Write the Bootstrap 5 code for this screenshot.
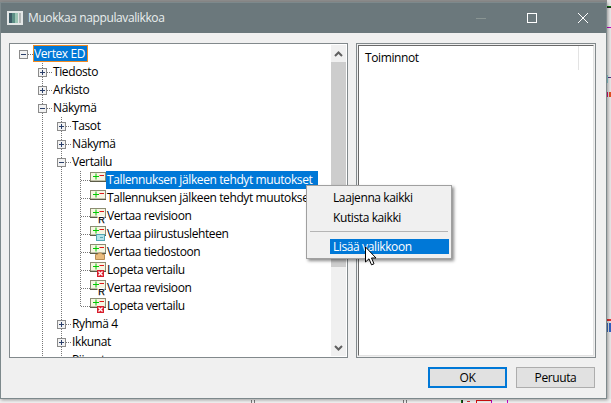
<!DOCTYPE html>
<html lang="fi">
<head>
<meta charset="utf-8">
<title>Muokkaa nappulavalikkoa</title>
<link href="https://cdn.jsdelivr.net/npm/bootstrap@5.3.0/dist/css/bootstrap.min.css" rel="stylesheet">
<style>
html,body{height:403px;overflow:hidden}
body{background:#fff;position:relative;font-family:"Open Sans","Noto Sans",sans-serif;font-size:12px;line-height:18px;color:#000;letter-spacing:-.39px}
.backdrop{position:absolute;left:0;top:0;width:611px;height:403px}
.dlg{position:relative;width:607px;height:397px;margin-top:2px;background:#f0f0f0;border:1px solid #7d898c;box-shadow:1px 1px 3px rgba(0,0,0,.35)}
.ttl{height:30px;background:#6b787c;color:#e9eeee;padding-left:6px;gap:5px}
.ctl{width:46px;height:30px}
.main-area{padding:10px 0 0 8px;gap:8px;height:325px}
.tree-box{width:339px;height:315px;border:1px solid #82898c;background:#fff;overflow:hidden}
.tree-body{padding:1px 0 0 4px;height:313px;overflow:hidden}
.trow{height:18px;white-space:nowrap}
.gc{width:19px;height:18px;flex:none;display:flex;align-items:center;justify-content:center}
.v{background:repeating-linear-gradient(to bottom,#777 0 1px,transparent 1px 2px) 9px 0/1px 100% no-repeat}
.h{background:repeating-linear-gradient(to right,#777 0 1px,transparent 1px 2px) 10px 9px/9px 1px no-repeat}
.vh{background:repeating-linear-gradient(to bottom,#777 0 1px,transparent 1px 2px) 9px 0/1px 100% no-repeat,repeating-linear-gradient(to right,#777 0 1px,transparent 1px 2px) 10px 9px/9px 1px no-repeat}
.elb{background:repeating-linear-gradient(to bottom,#777 0 1px,transparent 1px 2px) 9px 0/1px 10px no-repeat,repeating-linear-gradient(to right,#777 0 1px,transparent 1px 2px) 10px 9px/9px 1px no-repeat}
.exp{width:9px;height:9px;display:block;flex:none}
.ico{width:16px;height:18px;flex:none;display:block}
.lbl{padding:0 1px;height:18px}
.lbl-ico{padding:0 6px 0 1px}
.sel{background:#0078d7;color:#fff}
.sel-root{outline:1px solid #f08a24;outline-offset:-1px;height:17px;padding-right:3px;padding-left:1px}
.sbar{width:15px;height:311px;margin:1px 1px 0 0;flex:none;background:#f0f0f0}
.sb-btn{height:17px}
.sb-thumb{height:205px;background:#cdcdcd}
.sb-rest{flex:1}
.list-box{width:240px;height:315px;border:1px solid #82898c;padding:1px;background:#f0f0f0}
.list-in{height:100%;background:#fff;border:1px solid;border-color:#696969 #e3e3e3 #e3e3e3 #696969}
.colh{width:220px;height:24px;border-right:1px solid #e3e3e3;padding:3px 0 0 6px}
.foot{padding:9px 11px 0 0;gap:9px}
.win-btn{width:79px;height:21px;padding:0;border-radius:0;background:#e1e1e1;border:1px solid #adadad;color:#000;font-size:12px;line-height:18px;letter-spacing:-.39px}
.win-def{border:2px solid #0078d7}
.ctxm{position:absolute;left:306px;top:185px;width:146px;height:74px;background:#f0f0f0;border:1px solid #a0a0a0;box-shadow:2px 2px 3px rgba(0,0,0,.45);padding:2px 2px 0 2px}
.mi{height:20px;padding-left:24px;line-height:19px}
.msep{height:1px;background:#b4b4b4;margin:3px 1px 7px 1px}
.mi-sel{height:15px;line-height:15px;background:#0078d7;color:#fff;margin-left:21px;padding-left:3px}
.cur{position:absolute;left:364px;top:246px;width:14px;height:21px}
</style>
</head>
<body>
<svg class="backdrop" viewBox="0 0 611 403">
<rect width="611" height="2" fill="#8d8d8d"/>
<rect x="607" y="0" width="4" height="403" fill="#e6e6e6"/>
<rect x="607" y="6" width="4" height="1" fill="#0a7a0a"/><rect x="607" y="7" width="4" height="1" fill="#222"/>
<rect x="607" y="27" width="4" height="1" fill="#c000c0"/>
<rect x="607" y="75" width="1" height="8" fill="#8fd0d8"/><rect x="608" y="77" width="3" height="1" fill="#503080"/>
<rect x="607" y="92" width="1" height="5" fill="#e01070"/><rect x="609" y="92" width="2" height="5" fill="#e05020"/>
<rect x="607" y="323" width="1" height="9" fill="#4070c0"/><rect x="609" y="323" width="2" height="9" fill="#3060c0"/>
<rect x="607" y="319" width="4" height="2" fill="#e03030"/>
<rect y="399" width="611" height="4" fill="#efefef"/>
<rect x="251" y="400" width="1" height="3" fill="#777"/><rect x="254" y="400" width="1" height="3" fill="#777"/>
<rect x="403" y="400" width="1" height="3" fill="#777"/><rect x="406" y="400" width="1" height="3" fill="#777"/>
<rect x="461" y="400" width="1" height="3" fill="#0a7a0a"/><rect x="462" y="400" width="1" height="3" fill="#222"/>
<rect x="467" y="401" width="3" height="1" fill="#d03030"/>
<rect x="476" y="400" width="15" height="1" fill="#e01010"/><rect x="476" y="400" width="1" height="3" fill="#e01010"/><rect x="491" y="400" width="1" height="3" fill="#c000c0"/>
<rect x="507" y="400" width="1" height="3" fill="#d000d0"/>
</svg>

<svg width="0" height="0" class="d-block position-absolute">
<defs>
<symbol id="xp" viewBox="0 0 9 9"><rect x=".5" y=".5" width="8" height="8" fill="#f2f2f2" stroke="#8b8b8b"/><rect x="2" y="4" width="5" height="1" fill="#2a3f6a"/><rect x="4" y="2" width="1" height="5" fill="#2a3f6a"/></symbol>
<symbol id="xm" viewBox="0 0 9 9"><rect x=".5" y=".5" width="8" height="8" fill="#f2f2f2" stroke="#8b8b8b"/><rect x="2" y="4" width="5" height="1" fill="#2a3f6a"/></symbol>
<symbol id="cmp" viewBox="0 0 16 18"><rect x=".5" y="1.500" width="15" height="8.500" fill="#f6f6e2" stroke="#8c8c72"/><path d="M0 10.500h16" stroke="#5c5c48"/><path d="M3 5.500h6M6 2.500v6" stroke="#00c800"/><path d="M9.500 4.500h4.500" stroke="#e01818"/></symbol>
<symbol id="ovr" viewBox="0 0 16 18"><rect x="7.500" y="9" width="7" height="7" fill="#fff"/><text x="8.200" y="16" font-family="Liberation Sans" font-size="9" font-weight="400" stroke="#000" stroke-width=".25" fill="#000">R</text></symbol>
<symbol id="ovd" viewBox="0 0 16 18"><rect x="6.500" y="9.500" width="8" height="6" fill="#b4e3e8" stroke="#52a8b4"/><rect x="10" y="12" width="3" height="1" fill="#52a8b4"/></symbol>
<symbol id="ovf" viewBox="0 0 16 18"><path d="M5.500 16.500v-5h2l1-1.500h3l1 1.500h2v5z" fill="#e9bb7c" stroke="#b98d52"/></symbol>
<symbol id="ovx" viewBox="0 0 16 18"><rect x="7" y="9" width="7" height="7" fill="#d81e2c"/><path d="M8.500 10.500l4 4M12.500 10.500l-4 4" stroke="#fff" stroke-width="1.300"/></symbol>
</defs>
</svg>

<div class="dlg d-flex flex-column">
  <div class="ttl d-flex align-items-center">
    <svg width="16" height="14" viewBox="0 0 16 14"><rect width="16" height="14" fill="#e3e6e6"/><rect x="2" y="2" width="3" height="10" fill="#3d5c66"/><rect x="5" y="2" width="3" height="10" fill="#5d8f86"/><rect x="8" y="2" width="3" height="10" fill="#9cc4b4"/><rect x="12" y="2" width="2" height="10" fill="#b4b8b8"/></svg>
    <span class="flex-grow-1">Muokkaa nappulavalikkoa</span>
    <span class="ctl d-flex align-items-center justify-content-center"><svg width="10" height="10" viewBox="0 0 10 10"><path d="M0 5.500h10" stroke="#8a9593"/></svg></span>
    <span class="ctl d-flex align-items-center justify-content-center"><svg width="10" height="10" viewBox="0 0 10 10"><rect x=".5" y=".5" width="9" height="9" fill="none" stroke="#fff"/></svg></span>
    <span class="ctl d-flex align-items-center justify-content-center"><svg width="10" height="10" viewBox="0 0 10 10"><path d="M0 0l10 10M10 0L0 10" stroke="#fff"/></svg></span>
  </div>

  <div class="main-area d-flex">
    <div class="tree-box d-flex">
      <div class="tree-body flex-grow-1">
        <div class="trow d-flex"><span class="gc h"><svg class="exp"><use href="#xm"/></svg></span><span class="lbl sel sel-root">Vertex ED</span></div>
        <div class="trow d-flex"><span class="gc"></span><span class="gc vh"><svg class="exp"><use href="#xp"/></svg></span><span class="lbl">Tiedosto</span></div>
        <div class="trow d-flex"><span class="gc"></span><span class="gc vh"><svg class="exp"><use href="#xp"/></svg></span><span class="lbl">Arkisto</span></div>
        <div class="trow d-flex"><span class="gc"></span><span class="gc vh"><svg class="exp"><use href="#xm"/></svg></span><span class="lbl">Näkymä</span></div>
        <div class="trow d-flex"><span class="gc"></span><span class="gc v"></span><span class="gc vh"><svg class="exp"><use href="#xp"/></svg></span><span class="lbl">Tasot</span></div>
        <div class="trow d-flex"><span class="gc"></span><span class="gc v"></span><span class="gc vh"><svg class="exp"><use href="#xp"/></svg></span><span class="lbl">Näkymä</span></div>
        <div class="trow d-flex"><span class="gc"></span><span class="gc v"></span><span class="gc vh"><svg class="exp"><use href="#xm"/></svg></span><span class="lbl">Vertailu</span></div>
        <div class="trow d-flex"><span class="gc"></span><span class="gc v"></span><span class="gc v"></span><span class="gc vh"></span><svg class="ico"><use href="#cmp"/></svg><span class="lbl lbl-ico sel">Tallennuksen jälkeen tehdyt muutokset</span></div>
        <div class="trow d-flex"><span class="gc"></span><span class="gc v"></span><span class="gc v"></span><span class="gc vh"></span><svg class="ico"><use href="#cmp"/></svg><span class="lbl lbl-ico">Tallennuksen jälkeen tehdyt muutokset</span></div>
        <div class="trow d-flex"><span class="gc"></span><span class="gc v"></span><span class="gc v"></span><span class="gc vh"></span><svg class="ico"><use href="#cmp"/><use href="#ovr"/></svg><span class="lbl lbl-ico">Vertaa revisioon</span></div>
        <div class="trow d-flex"><span class="gc"></span><span class="gc v"></span><span class="gc v"></span><span class="gc vh"></span><svg class="ico"><use href="#cmp"/><use href="#ovd"/></svg><span class="lbl lbl-ico">Vertaa piirustuslehteen</span></div>
        <div class="trow d-flex"><span class="gc"></span><span class="gc v"></span><span class="gc v"></span><span class="gc vh"></span><svg class="ico"><use href="#cmp"/><use href="#ovf"/></svg><span class="lbl lbl-ico">Vertaa tiedostoon</span></div>
        <div class="trow d-flex"><span class="gc"></span><span class="gc v"></span><span class="gc v"></span><span class="gc vh"></span><svg class="ico"><use href="#cmp"/><use href="#ovx"/></svg><span class="lbl lbl-ico">Lopeta vertailu</span></div>
        <div class="trow d-flex"><span class="gc"></span><span class="gc v"></span><span class="gc v"></span><span class="gc vh"></span><svg class="ico"><use href="#cmp"/><use href="#ovr"/></svg><span class="lbl lbl-ico">Vertaa revisioon</span></div>
        <div class="trow d-flex"><span class="gc"></span><span class="gc v"></span><span class="gc v"></span><span class="gc elb"></span><svg class="ico"><use href="#cmp"/><use href="#ovx"/></svg><span class="lbl lbl-ico">Lopeta vertailu</span></div>
        <div class="trow d-flex"><span class="gc"></span><span class="gc v"></span><span class="gc vh"><svg class="exp"><use href="#xp"/></svg></span><span class="lbl">Ryhmä 4</span></div>
        <div class="trow d-flex"><span class="gc"></span><span class="gc v"></span><span class="gc vh"><svg class="exp"><use href="#xp"/></svg></span><span class="lbl">Ikkunat</span></div>
        <div class="trow d-flex"><span class="gc"></span><span class="gc v"></span><span class="gc vh"></span><span class="lbl">Piirustus</span></div>
      </div>
      <div class="sbar d-flex flex-column">
        <div class="sb-btn d-flex align-items-center justify-content-center"><svg width="9" height="6" viewBox="0 0 9 6"><path d="M1 5l3.500-3.500L8 5" fill="none" stroke="#606060" stroke-width="2"/></svg></div>
        <div class="sb-thumb"></div>
        <div class="sb-rest"></div>
        <div class="sb-btn d-flex align-items-center justify-content-center"><svg width="9" height="6" viewBox="0 0 9 6"><path d="M1 1l3.500 3.500L8 1" fill="none" stroke="#606060" stroke-width="2"/></svg></div>
      </div>
    </div>
    <div class="list-box">
      <div class="list-in"><div class="colh">Toiminnot</div></div>
    </div>
  </div>

  <div class="foot d-flex justify-content-end">
    <button type="button" class="btn win-btn win-def">OK</button>
    <button type="button" class="btn win-btn">Peruuta</button>
  </div>
</div>

<div class="ctxm">
  <div class="mi">Laajenna kaikki</div>
  <div class="mi">Kutista kaikki</div>
  <div class="msep"></div>
  <div class="mi-sel">Lisää valikkoon</div>
</div>
<svg class="cur" viewBox="0 0 14 21"><path d="M1.500 1v15l3.500-3.200 2.500 6 2.500-1-2.500-5.800H12z" fill="#fff" stroke="#000"/></svg>
<script src="https://cdn.jsdelivr.net/npm/bootstrap@5.3.0/dist/js/bootstrap.bundle.min.js"></script>
</body>
</html>
